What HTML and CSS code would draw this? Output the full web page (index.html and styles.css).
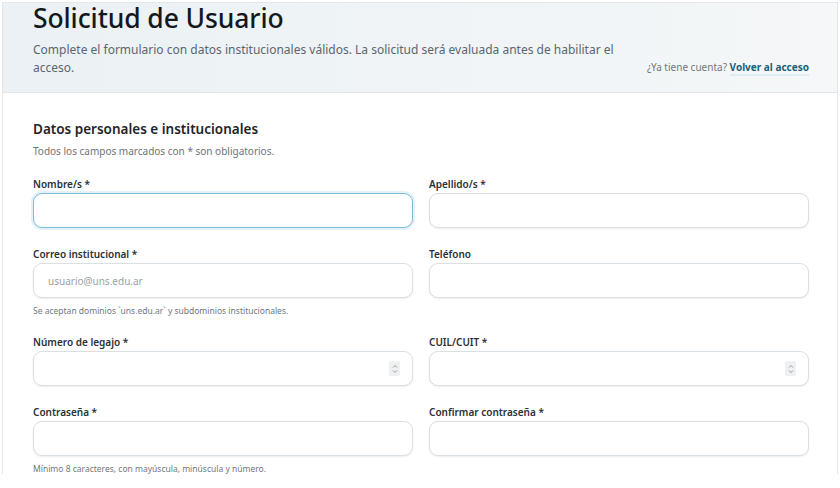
FILE: index.html
```html
<!DOCTYPE html>
<html lang="es">
<head>
    <meta charset="UTF-8">
    <meta name="viewport" content="width=device-width, initial-scale=1.0">
    <title>Solicitud de Usuario</title>
    <link rel="stylesheet" href="styles.css">
</head>
<body>
    <div class="card">
        <header class="card-header">
            <div class="intro">
                <h1>Solicitud de Usuario</h1>
                <p>Complete el formulario con datos institucionales válidos. La solicitud será evaluada antes de habilitar el acceso.</p>
            </div>
            <div class="login-link">¿Ya tiene cuenta? <a href="#">Volver al acceso</a></div>
        </header>

        <form class="card-body">
            <h2>Datos personales e institucionales</h2>
            <p class="muted">Todos los campos marcados con * son obligatorios.</p>

            <div class="fields">
                <div class="field">
                    <label>Nombre/s *</label>
                    <div class="input focus"><input type="text"></div>
                </div>
                <div class="field">
                    <label>Apellido/s *</label>
                    <div class="input"><input type="text"></div>
                </div>

                <div class="field">
                    <label>Correo institucional *</label>
                    <div class="input"><input type="email" placeholder="usuario@uns.edu.ar"></div>
                    <small>Se aceptan dominios `uns.edu.ar` y subdominios institucionales.</small>
                </div>
                <div class="field">
                    <label>Teléfono</label>
                    <div class="input"><input type="tel"></div>
                </div>

                <div class="field">
                    <label>Número de legajo *</label>
                    <div class="input">
                        <input type="text" inputmode="numeric">
                        <span class="spinner">
                            <svg viewBox="0 0 10 14" width="10" height="14">
                                <path d="M3 5.5 L5 3.5 L7 5.5 M3 8.5 L5 10.5 L7 8.5" fill="none" stroke="#8a9299" stroke-width="0.9"/>
                            </svg>
                        </span>
                    </div>
                </div>
                <div class="field">
                    <label>CUIL/CUIT *</label>
                    <div class="input">
                        <input type="text" inputmode="numeric">
                        <span class="spinner">
                            <svg viewBox="0 0 10 14" width="10" height="14">
                                <path d="M3 5.5 L5 3.5 L7 5.5 M3 8.5 L5 10.5 L7 8.5" fill="none" stroke="#8a9299" stroke-width="0.9"/>
                            </svg>
                        </span>
                    </div>
                </div>

                <div class="field">
                    <label>Contraseña *</label>
                    <div class="input"><input type="password"></div>
                    <small>Mínimo 8 caracteres, con mayúscula, minúscula y número.</small>
                </div>
                <div class="field">
                    <label>Confirmar contraseña *</label>
                    <div class="input"><input type="password"></div>
                </div>
            </div>
        </form>
    </div>
</body>
</html>
```

FILE: styles.css
```css
* {
    box-sizing: border-box;
}
body {
    margin: 0;
    padding: 2px 2px 0;
    background: #fff;
    font-family: "Noto Sans", "Open Sans", sans-serif;
    color: #1c2127;
}
.card {
    border: 1px solid #e3e7ea;
    border-bottom: none;
    background: #fff;
}
.card-header {
    display: flex;
    justify-content: space-between;
    align-items: flex-end;
    padding: 0 28px 15px 30px;
    background: linear-gradient(90deg, #ebf1f4 0%, #f0f4f6 55%, #f5f7f8 100%);
    border-bottom: 1px solid #e2e6e9;
}
.intro {
    max-width: 600px;
}
h1 {
    margin: 0;
    font-size: 26.5px;
    font-weight: 500;
    line-height: 30px;
    color: #15191e;
    letter-spacing: -0.1px;
}
.intro p {
    margin: 8px 0 0;
    font-size: 12px;
    line-height: 18px;
    color: #5b6670;
}
.login-link {
    font-size: 10px;
    color: #6f7880;
    padding-bottom: 3px;
}
.login-link a {
    color: #1d5f7c;
    font-weight: 700;
    text-decoration: none;
    border-bottom: 2px solid #dcedf4;
}
.card-body {
    padding: 26px 28px 0 30px;
}
h2 {
    margin: 0;
    font-size: 13.5px;
    font-weight: 600;
    line-height: 20px;
    color: #1f242a;
}
.muted {
    margin: 5px 0 0;
    font-size: 10px;
    color: #6b747c;
}
.fields {
    display: grid;
    grid-template-columns: 1fr 1fr;
    column-gap: 16px;
    row-gap: 19px;
    margin-top: 19px;
}
.field {
    display: flex;
    flex-direction: column;
}
label {
    font-size: 10px;
    font-weight: 600;
    line-height: 14px;
    color: #2a3037;
    margin-bottom: 2px;
}
.input {
    display: flex;
    align-items: center;
    height: 35px;
    border: 1px solid #dadfe3;
    border-radius: 9px;
    background: #fff;
    box-shadow: 0 1px 2px rgba(20, 30, 40, 0.08);
    padding: 0 12px;
}
.input.focus {
    border-color: #7cbdd6;
    box-shadow: 0 0 0 2px #e3f2f8, 0 1px 2px rgba(20, 30, 40, 0.08);
}
.input input {
    flex: 1;
    min-width: 0;
    border: none;
    outline: none;
    background: transparent;
    font-family: inherit;
    font-size: 10px;
    color: #1c2127;
}
.input input::placeholder {
    color: #9aa2a9;
}
.spinner {
    display: flex;
    align-items: center;
    justify-content: center;
    width: 11px;
    height: 15px;
    background: #eef0f2;
    border-radius: 2px;
}
small {
    margin-top: 7px;
    font-size: 8.5px;
    color: #6f7880;
}
```
